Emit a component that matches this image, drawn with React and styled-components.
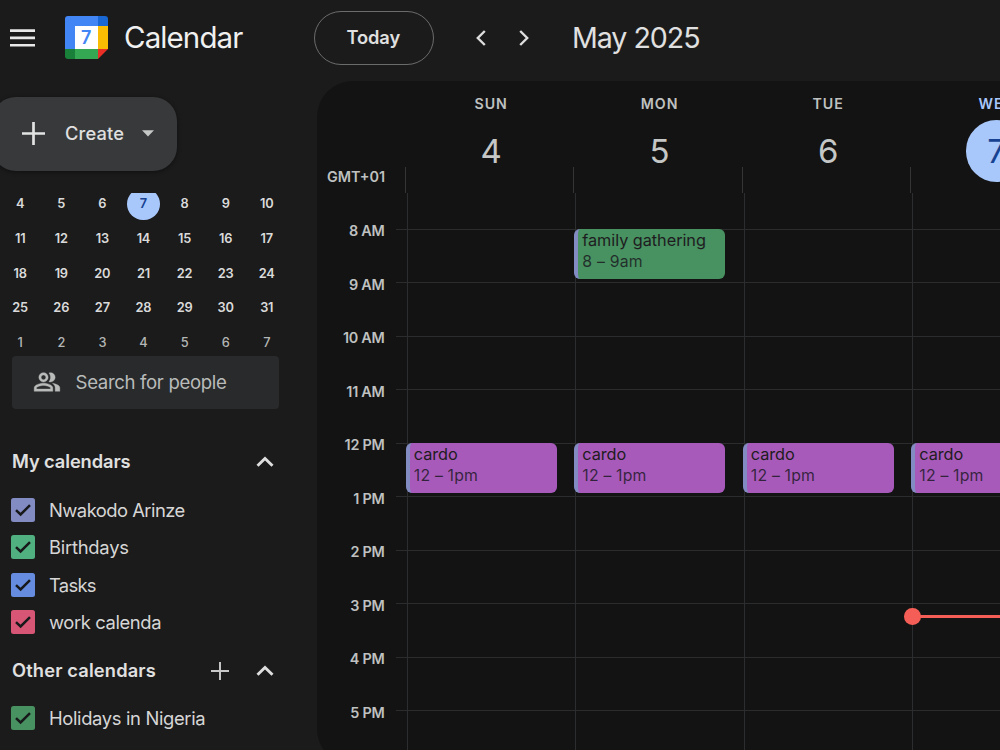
import React from "react";
import styled, { createGlobalStyle } from "styled-components";

const HOUR = 53.5;
const DAY = 168.5;

const GlobalStyle = createGlobalStyle`
  * { box-sizing: border-box; }
  body {
    margin: 0;
    background: #1b1b1b;
    overflow: hidden;
    font-family: Inter, "Liberation Sans", sans-serif;
    color: #e0e0e0;
  }
`;

const Page = styled.div`
  width: 1000px;
  height: 750px;
  overflow: hidden;
  display: flex;
  flex-direction: column;
`;

const TopBar = styled.header`
  flex: none;
  height: 80.5px;
  padding: 0 0 5px 10px;
  display: flex;
  align-items: center;
`;

const Brand = styled.div`
  width: 304px;
  display: flex;
  align-items: center;
  svg { flex: none; display: block; }
`;

const Logo = styled.svg`
  margin: 0 16px 0 30px;
`;

const Label = styled.span`
  font-size: ${(p) => p.$size}px;
  font-weight: ${(p) => p.$weight || 430};
  letter-spacing: ${(p) => p.$track || 0}px;
  color: ${(p) => p.$color || "inherit"};
  line-height: 1.2;
  white-space: nowrap;
`;

const TodayButton = styled.button`
  width: 119.5px;
  height: 54px;
  padding: 0 1px 0 0;
  border: 1px solid #6a6c6b;
  border-radius: 27px;
  background: transparent;
  color: #e0e0e0;
  font-family: inherit;
`;

const Arrows = styled.div`
  display: flex;
  gap: 31px;
  margin: 0 42px 0 41.5px;
  svg { display: block; }
`;

const Main = styled.div`
  flex: 1;
  display: flex;
  min-height: 0;
`;

const Sidebar = styled.aside`
  flex: none;
  width: 317px;
  padding-top: 16px;
`;

const CreateButton = styled.button`
  margin: 0 0 0 -8px;
  padding: 0 0 0 30px;
  width: 185.4px;
  height: 74.5px;
  border: 0;
  border-radius: 24px;
  background: #37393b;
  color: #e0e0e0;
  font-family: inherit;
  display: flex;
  align-items: center;
  box-shadow: 0 1px 4px rgba(0, 0, 0, 0.45);
  span { margin: 0 18px 0 20px; }
`;

const MiniMonth = styled.div`
  margin-top: 22px;
  height: 162.5px;
  overflow: hidden;
  width: 288px;
`;

const MiniGrid = styled.div`
  margin: -6.6px 0 0 -0.4px;
  display: grid;
  grid-template-columns: repeat(7, 41.1px);
  grid-auto-rows: 34.7px;
`;

const MiniDay = styled.div`
  display: flex;
  align-items: center;
  justify-content: center;
  font-size: 12.8px;
  letter-spacing: -0.2px;
  font-weight: ${(p) => (p.$dim ? 550 : 640)};
  color: ${(p) => (p.$dim ? "#b4b6b5" : "#dadada")};
`;

const MiniToday = styled.span`
  width: 32.5px;
  height: 32.5px;
  flex: none;
  border-radius: 50%;
  background: #a8c7fa;
  color: #174291;
  display: flex;
  align-items: center;
  justify-content: center;
`;

const SearchBox = styled.div`
  margin-left: 11.6px;
  width: 267.5px;
  height: 53.5px;
  border-radius: 4px;
  background: #282a2c;
  color: #b9bbba;
  display: flex;
  align-items: center;
  padding: 0 0 1px 21px;
  gap: 15px;
`;

const SectionHead = styled.div`
  height: 48px;
  margin: ${(p) => p.$top}px 0 4.5px;
  padding: 0 43.5px 0 12px;
  display: flex;
  align-items: center;
  justify-content: space-between;
`;

const SectionActions = styled.div`
  display: flex;
  align-items: center;
  gap: 26.5px;
`;

const CalendarRow = styled.label`
  height: 37.5px;
  padding-left: 11px;
  display: flex;
  align-items: center;
  gap: 14px;
`;

const Check = styled.span`
  width: 24px;
  height: 24px;
  border-radius: 2.5px;
  background: ${(p) => p.$color};
  display: flex;
  align-items: center;
  justify-content: center;
`;

const Panel = styled.main`
  flex: none;
  width: 800px;
  height: 684.5px;
  border-radius: 36px;
  background: #131313;
  overflow: hidden;
`;

const DayHeader = styled.div`
  height: 112px;
  display: flex;
`;

const Zone = styled.div`
  flex: none;
  width: 87.8px;
  padding: 0 0 7.6px 10px;
  display: flex;
  align-items: flex-end;
`;

const DayHead = styled.div`
  flex: none;
  width: ${DAY}px;
  padding: 14.5px 0 0 4.2px;
  display: flex;
  flex-direction: column;
  align-items: center;
  color: ${(p) => (p.$today ? "#a8c7fa" : "#bfc1c0")};
  background: linear-gradient(#333537, #333537) left bottom / 1px 26px no-repeat;
`;

const DayNumber = styled.div`
  width: 61.5px;
  height: 61.5px;
  margin-top: 8.4px;
  padding-top: 1.5px;
  border-radius: 50%;
  display: flex;
  align-items: center;
  justify-content: center;
  background: ${(p) => (p.$today ? "#a8c7fa" : "transparent")};
  color: ${(p) => (p.$today ? "#174291" : "#c4c7c5")};
`;

const Grid = styled.div`
  display: flex;
  height: 572px;
`;

const Hours = styled.div`
  flex: none;
  width: 67.6px;
  padding-top: 11.4px;
`;

const Hour = styled.div`
  height: ${HOUR}px;
  display: flex;
  align-items: center;
  justify-content: flex-end;
`;

const Column = styled.div`
  flex: none;
  position: relative;
  width: ${(p) => (p.$stub ? 11 : DAY)}px;
  margin-left: ${(p) => (p.$stub ? 11.2 : 0)}px;
  border-left: ${(p) => (p.$stub ? 0 : 1)}px solid #2b2d2f;
`;

const Cell = styled.div`
  height: ${(p) => (p.$first ? 37 : HOUR)}px;
  border-bottom: 1px solid #2b2c2d;
`;

const EventCard = styled.div`
  position: absolute;
  left: -2px;
  top: ${(p) => 36 + (p.$start - 8) * HOUR}px;
  width: 151.2px;
  height: 50.5px;
  border-radius: 6px;
  border-left: 4.5px solid #828bc2;
  background: ${(p) => p.$color};
  color: #1e1c20;
  padding: 2.6px 0 0 4px;
  display: flex;
  flex-direction: column;
  gap: 2px;
`;

const NowLine = styled.div`
  position: absolute;
  left: -1px;
  top: 422.5px;
  width: 100%;
  height: 3px;
  background: #f55e57;
  &::before {
    content: "";
    position: absolute;
    left: -8px;
    top: -7px;
    width: 16.5px;
    height: 16.5px;
    border-radius: 50%;
    background: #f55e57;
  }
`;

const Chevron = ({ d, w, h, stroke = 2.4 }) => (
  <svg width={w} height={h} viewBox={`0 0 ${w} ${h}`} fill="none" stroke="#dedede" strokeWidth={stroke}>
    <path d={d} />
  </svg>
);

const Up = () => <Chevron w={18} h={12} d="M1.500 9.800 9 2.500l7.500 7.300" stroke={2.9} />;

const Plus = ({ size, stroke, color }) => (
  <svg width={size} height={size} viewBox="0 0 24 24" stroke={color} strokeWidth={stroke}>
    <path d="M12 0v24M0 12h24" />
  </svg>
);

const miniDays = [
  ...Array.from({ length: 28 }, (_, i) => ({ n: i + 4 })),
  ...Array.from({ length: 7 }, (_, i) => ({ n: i + 1, dim: true })),
];

const mine = [
  ["Nwakodo Arinze", "#828bc2", -0.53],
  ["Birthdays", "#51b080", -0.25],
  ["Tasks", "#668ce0", -0.7],
  ["work calenda", "#d85675", -0.4],
];
const others = [["Holidays in Nigeria", "#489160", -0.35]];

const days = [
  { name: "SUN", n: 4 },
  { name: "MON", n: 5 },
  { name: "TUE", n: 6 },
  { name: "WED", n: 7, today: true },
];

const hours = ["8 AM", "9 AM", "10 AM", "11 AM", "12 PM", "1 PM", "2 PM", "3 PM", "4 PM", "5 PM"];

const cardo = { title: "cardo", time: "12 – 1pm", start: 12, color: "#a75aba" };
const events = {
  4: [cardo],
  5: [{ title: "family gathering", time: "8 – 9am", start: 8, color: "#489160" }, cardo],
  6: [cardo],
  7: [cardo],
};

const CalendarItem = ({ name, color, track }) => (
  <CalendarRow>
    <Check $color={color}>
      <svg width="18" height="14" viewBox="0 0 18 14" fill="none" stroke="#17191b" strokeWidth="2.5">
        <path d="M2 7.200 6.600 11.500 16 2.200" />
      </svg>
    </Check>
    <Label $size={18.4} $track={track} $color="#d6d6d6">{name}</Label>
  </CalendarRow>
);

const Cells = () => (
  <>
    <Cell $first />
    {hours.map((h) => <Cell key={h} />)}
  </>
);

export default function App() {
  return (
    <Page>
      <GlobalStyle />
      <TopBar>
        <Brand>
          <svg width="25" height="18" viewBox="0 0 25 18" fill="#e8e8e8">
            <path d="M0 .3h25v2.600H0zM0 7.600h25v2.600H0zM0 14.900h25v2.600H0z" />
          </svg>
          <Logo width="43" height="43" viewBox="0 0 43 43">
            <path d="M3 0h30v10H10v23H0V3a3 3 0 0 1 3-3z" fill="#4285f4" />
            <path d="M33 0h7a3 3 0 0 1 3 3v7.500H33z" fill="#1967d2" />
            <path d="M33 10h10v23H33z" fill="#fbbc04" />
            <path d="M10 33h23v10H10z" fill="#34a853" />
            <path d="M0 33h10v10H3a3 3 0 0 1-3-3z" fill="#188038" />
            <path d="M33 33h10L33 43z" fill="#ea2f26" />
            <path d="M10 10h23v23H10z" fill="#fff" />
            <text x="21.300" y="28" textAnchor="middle" fontFamily="Inter, sans-serif" fontSize="18" fontWeight="600" fill="#4285f4">7</text>
          </Logo>
          <Label $size={29.5} $track={-0.9} $color="#f0f0f0">Calendar</Label>
        </Brand>
        <TodayButton><Label $size={18.3} $weight={570} $track={-0.1}>Today</Label></TodayButton>
        <Arrows>
          <Chevron w={12} h={18} d="M9.800 2 2.800 9l7 7" />
          <Chevron w={12} h={18} d="M2.200 2l7 7-7 7" />
        </Arrows>
        <Label $size={28.6} $track={-1.05}>May 2025</Label>
      </TopBar>
      <Main>
        <Sidebar>
          <CreateButton>
            <Plus size={23} stroke={2.8} color="#e3e3e3" />
            <Label $size={18.3} $weight={550} $track={0.15}>Create</Label>
            <svg width="12" height="7" viewBox="0 0 12 7" fill="#c4c7c5"><path d="M0 .3h12L6 6.500z" /></svg>
          </CreateButton>
          <MiniMonth>
            <MiniGrid>
              {miniDays.map((d, i) => (
                <MiniDay key={i} $dim={d.dim}>
                  {d.n === 7 && !d.dim ? <MiniToday>7</MiniToday> : d.n}
                </MiniDay>
              ))}
            </MiniGrid>
          </MiniMonth>
          <SearchBox>
            <svg width="28" height="28" viewBox="0 0 24 24" fill="currentColor" stroke="currentColor" strokeWidth=".3">
              <path d="M16.670 13.130C18.040 14.060 19 15.320 19 17v3h4v-3c0-2.180-3.570-3.470-6.330-3.870zM15 12c2.210 0 4-1.790 4-4s-1.790-4-4-4c-.470 0-.910.100-1.330.240C14.500 5.270 15 6.580 15 8s-.500 2.730-1.330 3.760c.420.140.860.240 1.330.240zM9 12c2.210 0 4-1.790 4-4s-1.790-4-4-4-4 1.790-4 4 1.790 4 4 4zm0-6c1.100 0 2 .900 2 2s-.900 2-2 2-2-.900-2-2 .900-2 2-2zM9 13c-2.670 0-8 1.340-8 4v3h16v-3c0-2.660-5.330-4-8-4zm6 5H3v-.990C3.200 16.290 6.300 15 9 15s5.800 1.290 6 2v1z" />
            </svg>
            <Label $size={18.6} $track={-0.35}>Search for people</Label>
          </SearchBox>
          <SectionHead $top={29.3}>
            <Label $size={18.3} $weight={570} $track={-0.1}>My calendars</Label>
            <Up />
          </SectionHead>
          <div>
            {mine.map(([n, c, t]) => <CalendarItem key={n} name={n} color={c} track={t} />)}
          </div>
          <SectionHead $top={6.2}>
            <Label $size={18.3} $weight={570} $track={0.15}>Other calendars</Label>
            <SectionActions>
              <Plus size={18} stroke={2.6} color="#c8c8c8" />
              <Up />
            </SectionActions>
          </SectionHead>
          {others.map(([n, c, t]) => <CalendarItem key={n} name={n} color={c} track={t} />)}
        </Sidebar>
        <Panel>
          <DayHeader>
            <Zone><Label $size={14.4} $weight={570} $color="#bfc1c0">GMT+01</Label></Zone>
            {days.map((d) => (
              <DayHead key={d.n} $today={d.today}>
                <Label $size={14.2} $weight={600} $track={1}>{d.name}</Label>
                <DayNumber $today={d.today}><Label $size={33}>{d.n}</Label></DayNumber>
              </DayHead>
            ))}
          </DayHeader>
          <Grid>
            <Hours>
              {hours.map((h) => (
                <Hour key={h}><Label $size={14.4} $weight={570} $track={-0.25} $color="#bfc1c0">{h}</Label></Hour>
              ))}
            </Hours>
            <Column $stub><Cells /></Column>
            {days.map((d) => (
              <Column key={d.n}>
                <Cells />
                {events[d.n].map((e) => (
                  <EventCard key={e.title} $start={e.start} $color={e.color}>
                    <Label $size={16.3} $track={-0.05}>{e.title}</Label>
                    <Label $size={15.8} $track={0.2} $color="rgba(25,22,30,.82)">{e.time}</Label>
                  </EventCard>
                ))}
                {d.today && <NowLine />}
              </Column>
            ))}
          </Grid>
        </Panel>
      </Main>
    </Page>
  );
}
